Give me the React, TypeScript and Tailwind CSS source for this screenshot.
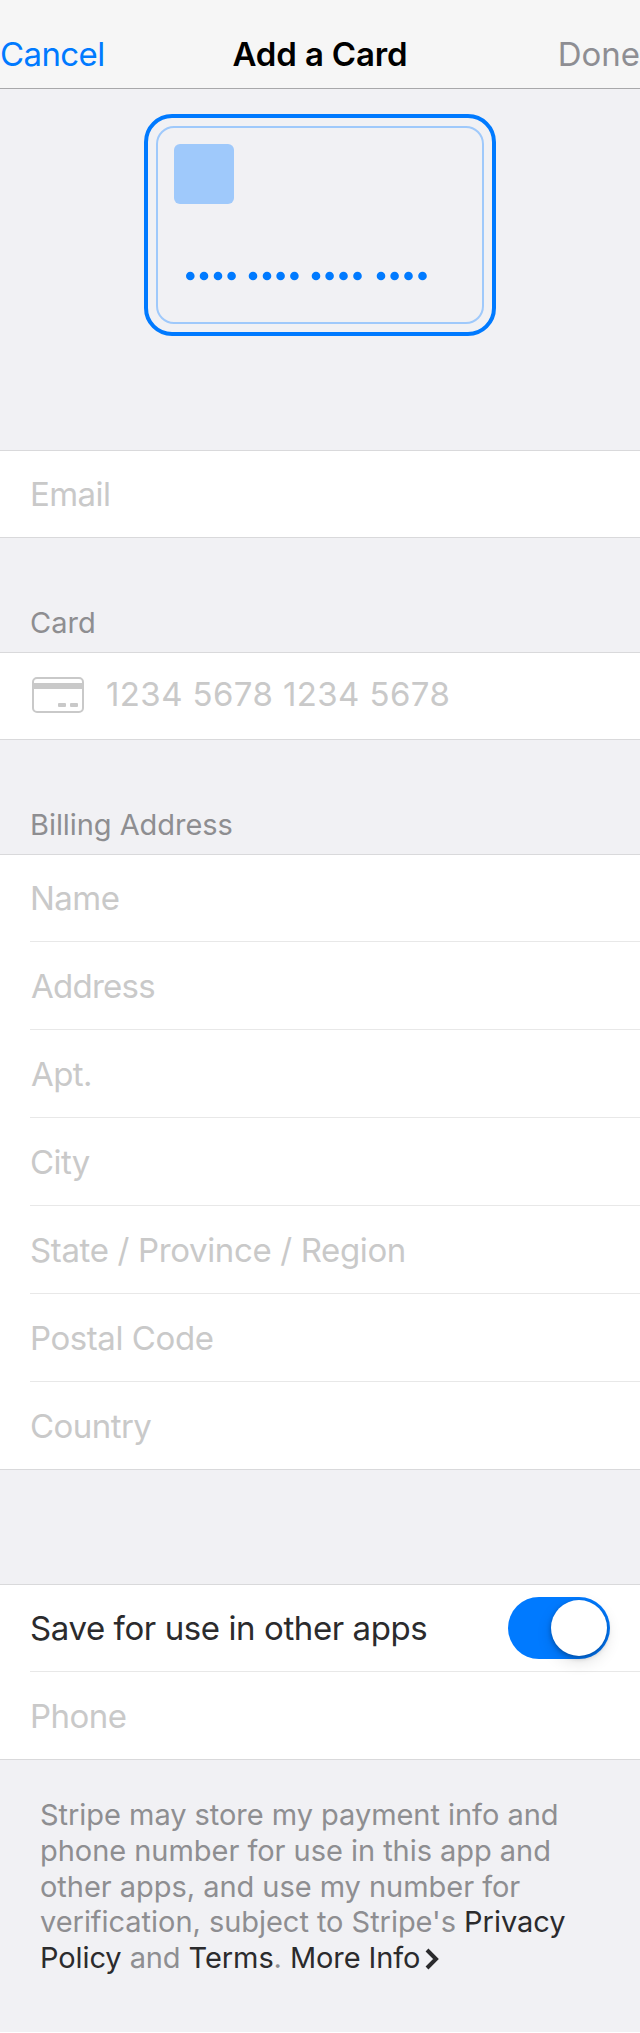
import React from 'react';

const address = [
  { label: 'Name', spacing: 'tracking-[-0.53px]' },
  { label: 'Address', spacing: 'ml-px tracking-[-0.75px]' },
  { label: 'Apt.', spacing: 'ml-px tracking-[-0.6px]' },
  { label: 'City', spacing: 'tracking-[-0.6px]' },
  { label: 'State / Province / Region', spacing: 'tracking-[-0.36px]' },
  { label: 'Postal Code', spacing: 'tracking-[-0.43px]' },
  { label: 'Country', spacing: 'tracking-[-0.55px]' },
];

const dots = [
  46.3, 60, 74, 87.6, 109, 123, 136.6, 150.4, 172, 185.6, 199.5, 213.5, 237, 250.6, 264.5, 278.5,
];

function Field({ label, spacing, first = false, last = false }: { label: string; spacing: string; first?: boolean; last?: boolean }) {
  return (
    <div className={`flex items-center text-[#c9c9c9] ${first || last ? 'h-[87px]' : 'h-[88px]'} ${last ? '' : 'border-b border-[#e8e8e8]'}`}>
      <span className={`text-[33px] leading-[40px] ${spacing}`}>{label}</span>
    </div>
  );
}

function CardPreview() {
  return (
    <svg width="352" height="222" viewBox="0 0 352 222" fill="none">
      <rect x="2" y="2" width="348" height="218" rx="26" stroke="#007aff" strokeWidth="4" />
      <rect x="13" y="13" width="326" height="196" rx="17" stroke="#9fc9fb" strokeWidth="2" />
      <rect x="30" y="30" width="60" height="60" rx="6" fill="#9fc9fb" />
      {dots.map((x) => (
        <circle key={x} cx={x} cy="162" r="4.3" fill="#007aff" />
      ))}
    </svg>
  );
}

function CardIcon() {
  return (
    <svg width="52" height="36" viewBox="0 0 52 36" fill="none">
      <rect x="1" y="1" width="50" height="34" rx="4" stroke="#c9c9c9" strokeWidth="2" />
      <rect x="1" y="6" width="50" height="6" fill="#c9c9c9" />
      <rect x="26" y="26" width="8" height="4" rx="1" fill="#c9c9c9" />
      <rect x="38" y="26" width="8" height="4" rx="1" fill="#c9c9c9" />
    </svg>
  );
}

export default function App() {
  return (
    <div className="h-[2033px] w-[640px] overflow-hidden bg-white">
      <div className="flex h-[2032px] flex-col whitespace-nowrap bg-[#f1f1f4] font-['Inter',sans-serif] text-[#2b2b2d]">
        <header className="grid h-[89px] shrink-0 grid-cols-[1fr_auto_1fr] border-b border-[#a8a8aa] bg-[#f6f6f6] pt-[34px] text-[33px] leading-[40px]">
          <span className="tracking-[-0.6px] text-[#007aff]">Cancel</span>
          <span className="font-semibold tracking-[-0.15px] text-black">Add a Card</span>
          <span className="text-right text-[#8e8e93]">Done</span>
        </header>
        <div className="flex h-[361px] shrink-0 justify-center pt-[25px]">
          <CardPreview />
        </div>
        <section className="h-[88px] shrink-0 border-y border-[#d9d9db] bg-white pl-[30px]">
          <div className="flex h-[85px] items-center text-[33px] leading-[40px] tracking-[-0.57px] text-[#c9c9c9]">Email</div>
        </section>
        <h2 className="flex h-[114px] shrink-0 items-end pb-[11px] pl-[30px] text-[29px] leading-[36px] text-[#8e8e91]">Card</h2>
        <section className="flex h-[88px] shrink-0 items-center gap-[22px] border-y border-[#d9d9db] bg-white pb-[2px] pl-8">
          <CardIcon />
          <span className="pb-[2px] text-[33px] leading-[40px] tracking-[0.4px] text-[#c9c9c9]">1234 5678 1234 5678</span>
        </section>
        <h2 className="flex h-[114px] shrink-0 items-end pb-[11px] pl-[30px] text-[29px] leading-[36px] tracking-[-0.06px] text-[#8e8e91]">Billing Address</h2>
        <section className="h-[616px] shrink-0 border-y border-[#d9d9db] bg-white pl-[30px]">
          {address.map((field, i) => (
            <Field key={field.label} {...field} first={i === 0} last={i === address.length - 1} />
          ))}
        </section>
        <section className="mt-[114px] h-[176px] shrink-0 border-y border-[#d9d9db] bg-white pl-[30px]">
          <div className="flex h-[87px] items-center justify-between border-b border-[#e8e8e8] pr-[30px]">
            <span className="text-[33px] leading-[40px] tracking-[-0.41px]">Save for use in other apps</span>
            <div className="flex h-[62px] w-[102px] items-center justify-end rounded-full bg-[#007aff] pr-[3px]">
              <div className="size-14 rounded-full bg-white shadow-[0_6px_16px_rgba(0,0,0,0.12),0_2px_5px_rgba(0,0,0,0.3)]" />
            </div>
          </div>
          <Field label="Phone" spacing="tracking-[-0.54px]" last />
        </section>
        <p className="pl-10 pt-[37px] text-[29px] leading-[35.75px] tracking-[-0.04px] text-[#8e8e91]">
          Stripe may store my payment info and<br />
          phone number for use in this app and<br />
          other apps, and use my number for<br />
          verification, subject to Stripe's <span className="text-[#2b2b2d]">Privacy</span><br />
          <span className="tracking-[-0.09px]">
            <span className="text-[#2b2b2d]">Policy</span> and <span className="text-[#2b2b2d]">Terms</span>.{' '}
            <span className="text-[#2b2b2d]">
              More Info
              <svg className="ml-[5px] inline-block align-[-2px]" width="14" height="22" viewBox="0 0 14 22" fill="none">
                <path d="M2 2L11 11L2 20" stroke="#2b2b2d" strokeWidth="4" />
              </svg>
            </span>
          </span>
        </p>
      </div>
    </div>
  );
}
